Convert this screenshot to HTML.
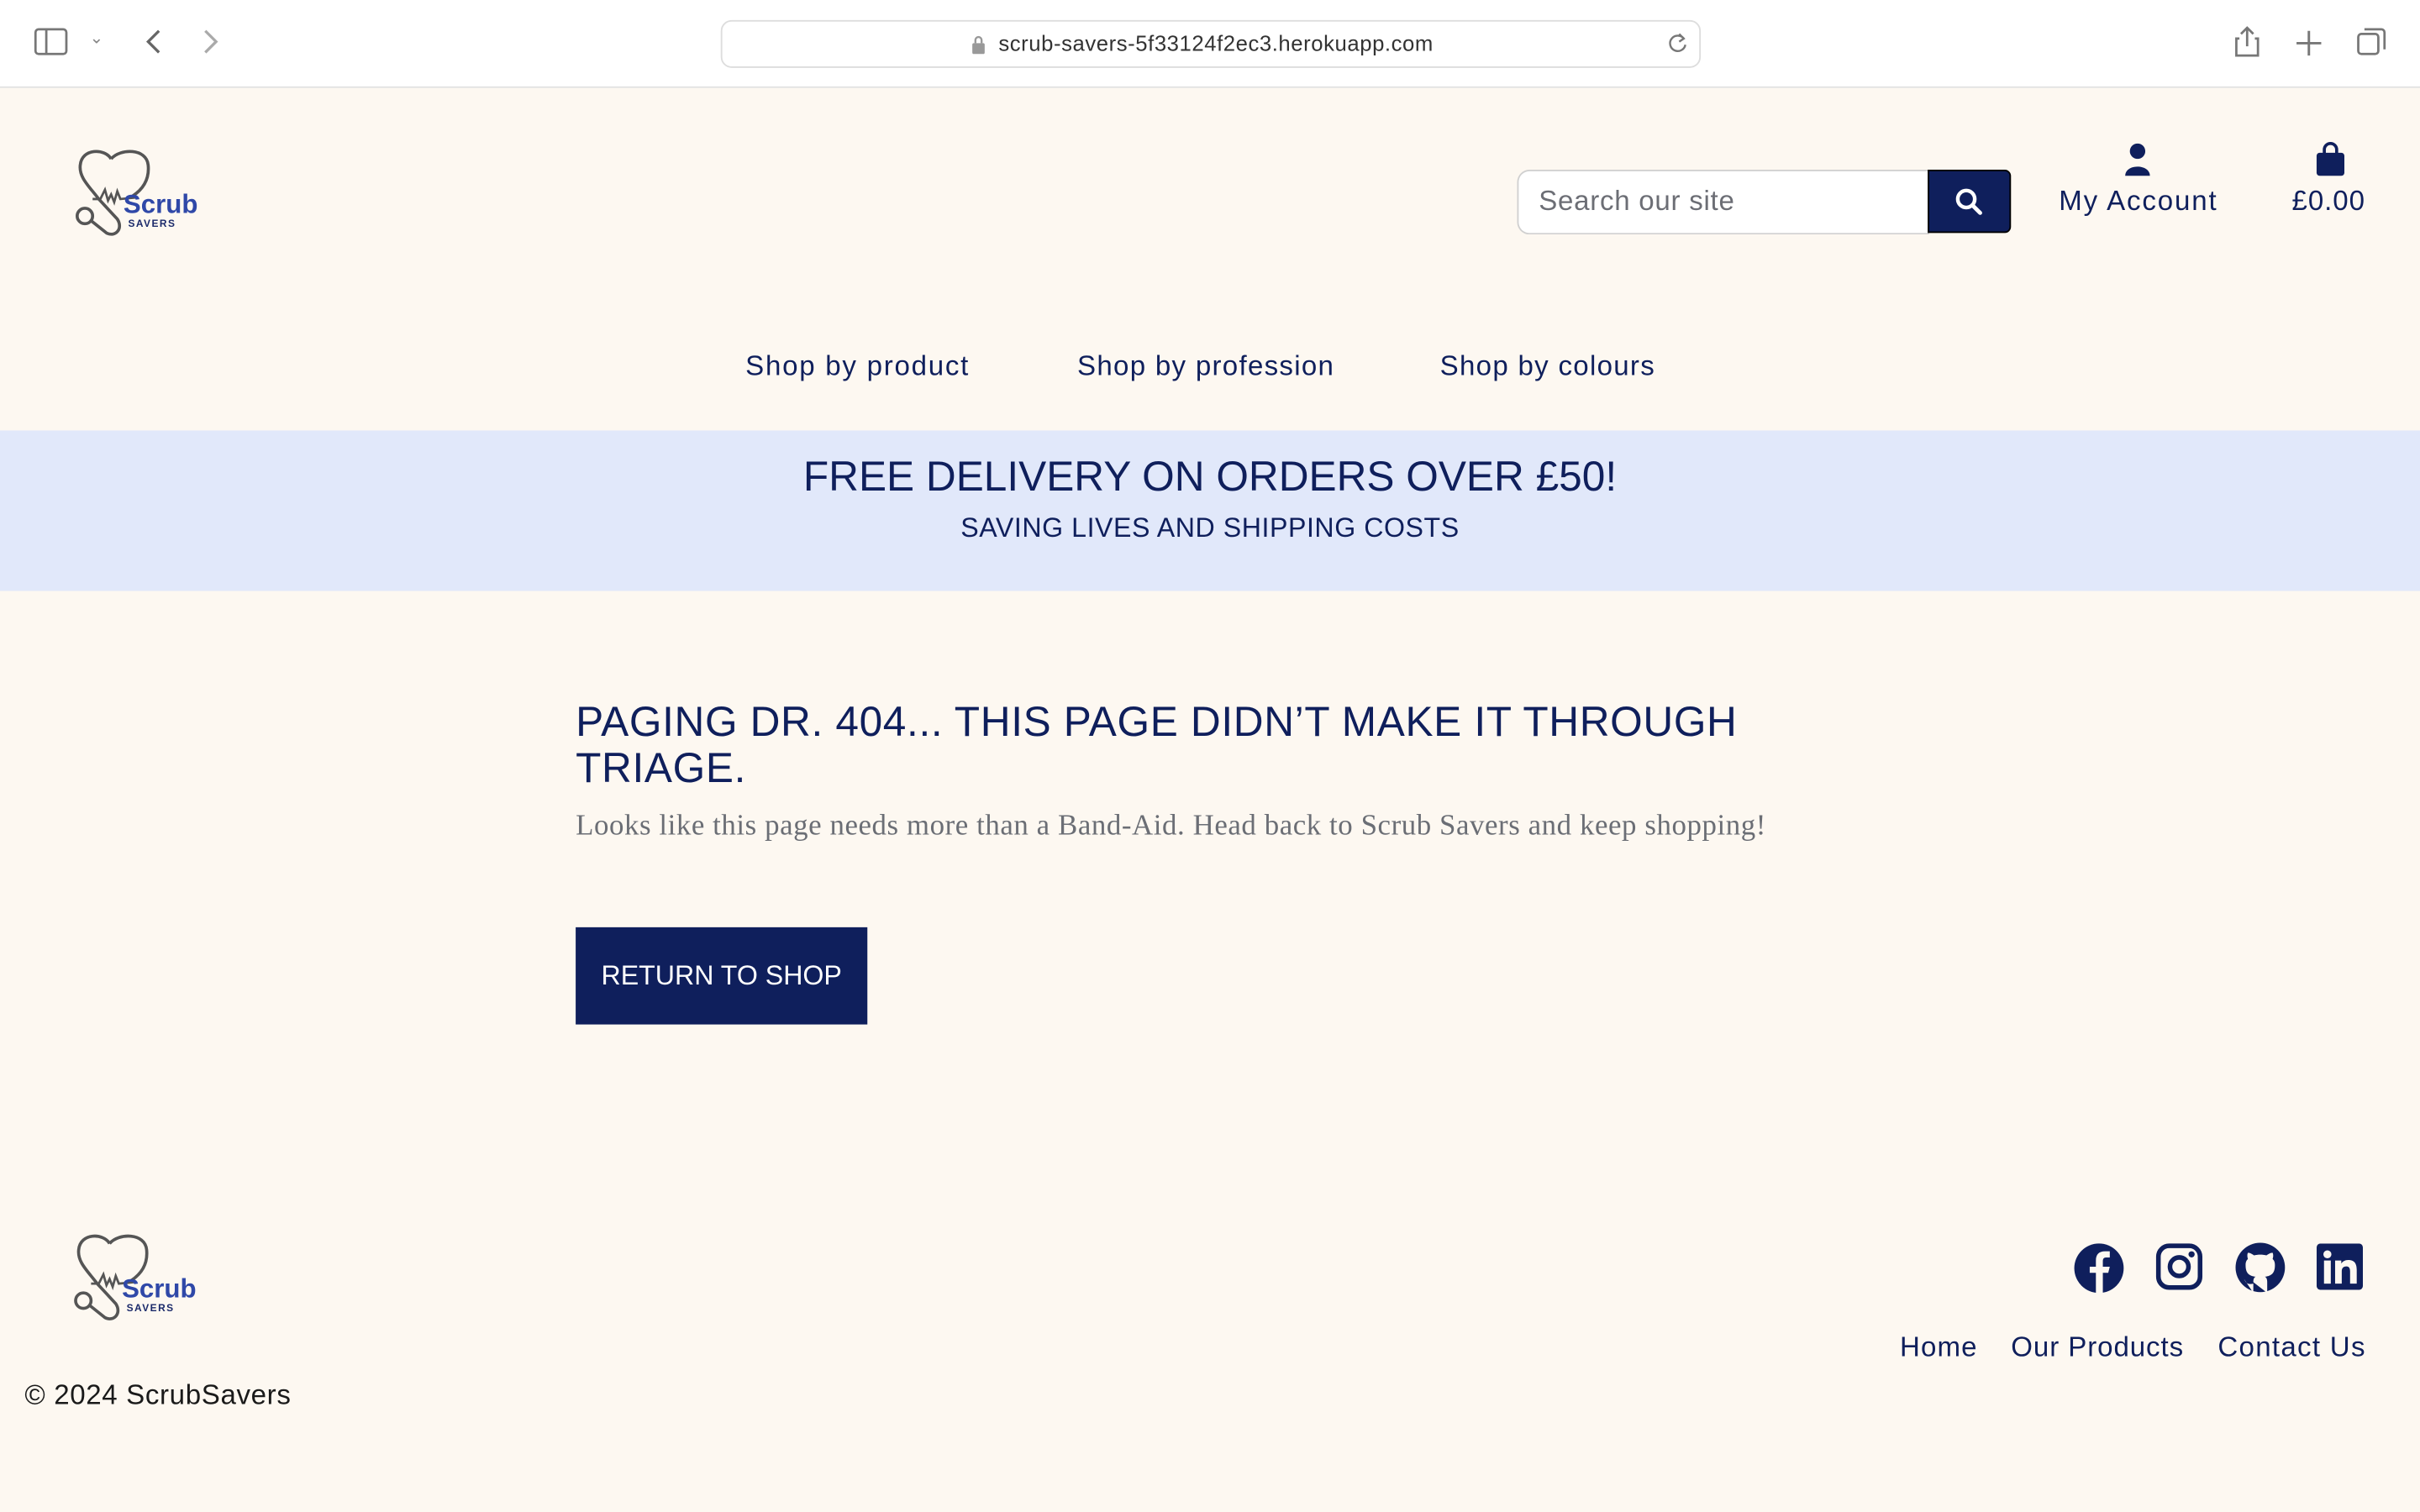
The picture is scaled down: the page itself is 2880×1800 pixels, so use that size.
<!DOCTYPE html>
<html><head><meta charset="utf-8"><style>
html,body{margin:0;padding:0;width:2880px;height:1800px;overflow:hidden;background:#fdf8f1}
#w{position:absolute;left:0;top:0;width:1568px;height:980px;transform:scale(1.836735);transform-origin:0 0;font-family:"Liberation Sans",sans-serif;color:#0f1f5c}
.a{position:absolute;white-space:nowrap}
.n{letter-spacing:0.8px}
</style></head><body><div id="w">
<!-- browser bar -->
<div class="a" style="left:0;top:0;width:1568px;height:56px;background:#fff;border-bottom:1px solid #e2e2e2"></div>
<svg class="a" style="left:22px;top:18px" width="22" height="18" viewBox="0 0 22 18"><rect x="1" y="1" width="20" height="16" rx="2" fill="none" stroke="#777" stroke-width="1.5"/><line x1="8" y1="1" x2="8" y2="17" stroke="#777" stroke-width="1.5"/></svg>
<div class="a" style="left:58px;top:18px;font-size:11px;color:#888">⌄</div>
<svg class="a" style="left:92px;top:18px" width="14" height="18"><path d="M11 2 L4 9 L11 16" fill="none" stroke="#666" stroke-width="1.8"/></svg>
<svg class="a" style="left:130px;top:18px" width="14" height="18"><path d="M3 2 L10 9 L3 16" fill="none" stroke="#aaa" stroke-width="1.8"/></svg>
<div class="a" style="left:467px;top:13px;width:633px;height:29px;border:1px solid #ddd;border-radius:7px;background:#fff"></div>
<svg class="a" style="left:629px;top:22px" width="10" height="14"><rect x="1" y="6" width="8" height="7" rx="1" fill="#999"/><path d="M3 6 V4 a2 2 0 0 1 4 0 V6" fill="none" stroke="#999" stroke-width="1.3"/></svg>
<div class="a" style="left:647px;top:20px;font-size:14px;color:#333;letter-spacing:0.3px">scrub-savers-5f33124f2ec3.herokuapp.com</div>
<svg class="a" style="left:1080px;top:20px" width="14" height="16"><path d="M11 5 A5 5 0 1 0 12 9" fill="none" stroke="#777" stroke-width="1.3"/><path d="M8 2 L11 5 L8 7" fill="none" stroke="#777" stroke-width="1.3"/></svg>
<svg class="a" style="left:1447px;top:16px" width="18" height="22"><path d="M4 9 H2 V20 H16 V9 H14 M9 2 V14 M5 6 L9 2 L13 6" fill="none" stroke="#777" stroke-width="1.5"/></svg>
<svg class="a" style="left:1487px;top:19px" width="18" height="18"><path d="M9 1 V17 M1 9 H17" stroke="#777" stroke-width="1.6"/></svg>
<svg class="a" style="left:1527px;top:17px" width="20" height="20"><rect x="1" y="5" width="13" height="13" rx="2" fill="none" stroke="#777" stroke-width="1.5"/><path d="M5 2 H16 a2 2 0 0 1 2 2 V15" fill="none" stroke="#777" stroke-width="1.5"/></svg>

<!-- logo -->
<svg class="a" style="left:48px;top:95px" width="82" height="60" viewBox="0 0 82 60">
<path d="M24 8 C20 1 5 1 4 12 C3 20 10 26 16 34 L28 47 C32 53 27 59 21 56 L11 48 M24 8 C30 1 47 1 48 12 C49 22 44 28 38 32" fill="none" stroke="#555" stroke-width="2"/>
<path d="M12 34 L17 34 L20 28 L22 35 L24 31 L26 36 L28 29 L30 34 L40 33" fill="none" stroke="#555" stroke-width="1.5"/>
<circle cx="7" cy="45" r="5" fill="none" stroke="#555" stroke-width="2"/>
<text x="32" y="43" font-family="Liberation Sans" font-weight="bold" font-size="17" fill="#2f48a8">Scrub</text>
<text x="35" y="52" font-family="Liberation Sans" font-weight="bold" font-size="6.5" fill="#1b2a6a" letter-spacing="0.8">SAVERS</text>
</svg>

<!-- search -->
<div class="a" style="left:983px;top:110px;width:266px;height:40px;border:1px solid #d0d0d0;border-right:none;border-radius:8px 0 0 8px;background:#fff"></div>
<div class="a" style="left:997px;top:120px;font-size:18px;color:#6c6e75;letter-spacing:0.4px">Search our site</div>
<div class="a" style="left:1249px;top:110px;width:54px;height:41px;background:#0f1f5c;border:1px solid #000;border-radius:0 4px 4px 0;box-sizing:border-box"></div>
<svg class="a" style="left:1266px;top:121px" width="20" height="20"><circle cx="8" cy="8" r="5.5" fill="none" stroke="#fff" stroke-width="2.4"/><path d="M12 12 L17 17" stroke="#fff" stroke-width="2.6" stroke-linecap="round"/></svg>
<svg class="a" style="left:1375px;top:92px" width="20" height="22"><circle cx="10" cy="6" r="5" fill="#0f1f5c"/><path d="M2 22 C2 14 18 14 18 22 Z" fill="#0f1f5c"/></svg>
<div class="a" style="left:1334px;top:120px;font-size:18px;letter-spacing:1px">My Account</div>
<svg class="a" style="left:1500px;top:92px" width="20" height="22"><path d="M6 8 V5 a4 4 0 0 1 8 0 V8" fill="none" stroke="#0f1f5c" stroke-width="2"/><rect x="1" y="7" width="18" height="15" rx="2" fill="#0f1f5c"/></svg>
<div class="a" style="left:1485px;top:120px;font-size:18px;letter-spacing:0.5px">£0.00</div>

<!-- nav -->
<div class="a n" style="left:483px;top:227px;font-size:18px;letter-spacing:0.95px">Shop by product</div>
<div class="a n" style="left:698px;top:227px;font-size:18px;letter-spacing:0.7px">Shop by profession</div>
<div class="a n" style="left:933px;top:227px;font-size:18px;letter-spacing:0.7px">Shop by colours</div>

<!-- banner -->
<div class="a" style="left:0;top:279px;width:1568px;height:104px;background:#e1e8fa"></div>
<div class="a" style="left:0;top:294px;width:1568px;text-align:center;font-size:27px">FREE DELIVERY ON ORDERS OVER £50!</div>
<div class="a" style="left:0;top:332px;width:1568px;text-align:center;font-size:17.5px;letter-spacing:0.3px">SAVING LIVES AND SHIPPING COSTS</div>

<!-- content -->
<div class="a" style="left:373px;top:453px;font-size:27px;line-height:30px;letter-spacing:0.35px">PAGING DR. 404... THIS PAGE DIDN’T MAKE IT THROUGH<br>TRIAGE.</div>
<div class="a" style="left:373px;top:525px;font-size:19px;color:#6b6e75;font-family:'Liberation Serif',serif;letter-spacing:0.3px">Looks like this page needs more than a Band-Aid. Head back to Scrub Savers and keep shopping!</div>
<div class="a" style="left:373px;top:601px;width:189px;height:63px;background:#0f1f5c;color:#fff;font-size:17.5px;line-height:63px;text-align:center">RETURN TO SHOP</div>

<!-- footer -->
<svg class="a" style="left:47px;top:798px" width="82" height="60" viewBox="0 0 82 60">
<path d="M24 8 C20 1 5 1 4 12 C3 20 10 26 16 34 L28 47 C32 53 27 59 21 56 L11 48 M24 8 C30 1 47 1 48 12 C49 22 44 28 38 32" fill="none" stroke="#555" stroke-width="2"/>
<path d="M12 34 L17 34 L20 28 L22 35 L24 31 L26 36 L28 29 L30 34 L40 33" fill="none" stroke="#555" stroke-width="1.5"/>
<circle cx="7" cy="45" r="5" fill="none" stroke="#555" stroke-width="2"/>
<text x="32" y="43" font-family="Liberation Sans" font-weight="bold" font-size="17" fill="#2f48a8">Scrub</text>
<text x="35" y="52" font-family="Liberation Sans" font-weight="bold" font-size="6.5" fill="#1b2a6a" letter-spacing="0.8">SAVERS</text>
</svg>
<svg class="a" style="left:1343px;top:805px" width="34" height="34" viewBox="0 0 34 34"><circle cx="17" cy="17" r="16" fill="#0f1f5c"/><path d="M15 34 V20 H11 V16 H15 V12 C15 8 17 6 21 6 L24 6 V10 H21.5 C20 10 19.5 11 19.5 12.5 V16 H24 L23 20 H19.5 V34 Z" fill="#fdf8f1"/></svg>
<svg class="a" style="left:1396px;top:805px" width="32" height="32" viewBox="0 0 32 32"><rect x="2.5" y="2.5" width="27" height="27" rx="7" fill="none" stroke="#0f1f5c" stroke-width="3"/><circle cx="16" cy="16" r="6" fill="none" stroke="#0f1f5c" stroke-width="3"/><circle cx="24" cy="8" r="2" fill="#0f1f5c"/></svg>
<svg class="a" style="left:1448px;top:805px" width="33" height="33" viewBox="0 0 33 33"><circle cx="16.5" cy="16.5" r="16" fill="#0f1f5c"/><path d="M12 33 V27 C8 28 7 26 6 24 M21 33 V26 C21 24 20.5 23 19.5 22.5 C24 22 26 20 26 15 C26 13 25.5 12 24.5 11 C25 9.5 25 8 24.5 7 C23 7 21.5 8 20.5 8.7 C18 8 15 8 12.5 8.7 C11.5 8 10 7 8.5 7 C8 8 8 9.5 8.5 11 C7.5 12 7 13 7 15 C7 20 9 22 13.5 22.5 C12.5 23 12 24 12 26" fill="#fdf8f1"/></svg>
<svg class="a" style="left:1501px;top:806px" width="30" height="30" viewBox="0 0 30 30"><rect x="0" y="0" width="30" height="30" rx="2.5" fill="#0f1f5c"/><circle cx="7" cy="7" r="2.6" fill="#fdf8f1"/><rect x="4.8" y="11" width="4.4" height="15" fill="#fdf8f1"/><path d="M12 11 H16 V13 C17 11.5 18.5 10.7 20.5 10.7 C24 10.7 26 12.5 26 17 V26 H21.7 V18 C21.7 16 21 14.8 19.3 14.8 C17.3 14.8 16.3 16 16.3 18 V26 H12 Z" fill="#fdf8f1"/></svg>
<div class="a" style="left:1231px;top:863px;font-size:18px;letter-spacing:0.6px">Home</div>
<div class="a" style="left:1303px;top:863px;font-size:18px;letter-spacing:0.5px">Our Products</div>
<div class="a" style="left:1437px;top:863px;font-size:18px;letter-spacing:0.7px">Contact Us</div>
<div class="a" style="left:16px;top:894px;font-size:18px;color:#1a1a1a;letter-spacing:0.35px">© 2024 ScrubSavers</div>
</div></body></html>
